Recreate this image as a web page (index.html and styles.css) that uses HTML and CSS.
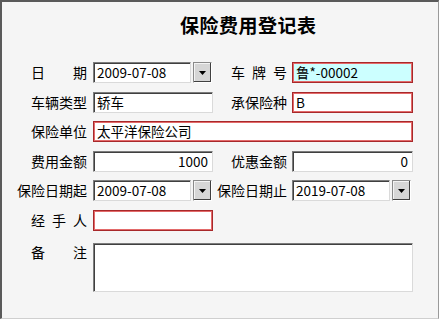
FILE: index.html
```html
<!DOCTYPE html>
<html lang="zh">
<head>
<meta charset="utf-8">
<link rel="stylesheet" href="styles.css">
</head>
<body>
<div class="frame">
  <h1 class="title">保险费用登记表</h1>
  <div class="form">
    <div class="label"><span class="sp"><span>日</span><span>期</span></span></div>
    <div class="datefield">
      <div class="box sunken date">2009-07-08</div>
      <div class="drop"><svg width="9" height="5" viewBox="0 0 9 5"><path d="M1 0h7L4.5 4z" fill="#000"/></svg></div>
    </div>
    <div class="label label2"><span class="sp w3"><span>车</span><span>牌</span><span>号</span></span></div>
    <div class="box red cyan">鲁*-00002</div>

    <div class="label">车辆类型</div>
    <div class="box sunken">轿车</div>
    <div class="label label2">承保险种</div>
    <div class="box red">B</div>

    <div class="label">保险单位</div>
    <div class="box red span3">太平洋保险公司</div>

    <div class="label">费用金额</div>
    <div class="box sunken num">1000</div>
    <div class="label label2">优惠金额</div>
    <div class="box sunken num">0</div>

    <div class="label">保险日期起</div>
    <div class="datefield">
      <div class="box sunken date">2009-07-08</div>
      <div class="drop"><svg width="9" height="5" viewBox="0 0 9 5"><path d="M1 0h7L4.5 4z" fill="#000"/></svg></div>
    </div>
    <div class="label label2">保险日期止</div>
    <div class="datefield">
      <div class="box sunken date">2019-07-08</div>
      <div class="drop"><svg width="9" height="5" viewBox="0 0 9 5"><path d="M1 0h7L4.5 4z" fill="#000"/></svg></div>
    </div>

    <div class="label"><span class="sp"><span>经</span><span>手</span><span>人</span></span></div>
    <div class="box red"></div>
    <div></div>
    <div></div>

    <div class="label top"><span class="sp"><span>备</span><span>注</span></span></div>
    <div class="box sunken memo span3"></div>
  </div>
</div>
</body>
</html>
```
FILE: styles.css
```css
* { box-sizing: border-box; }
html, body { margin: 0; padding: 0; background: #ffffff; }
body {
  font-family: "Noto Sans CJK SC", "Noto Sans", sans-serif;
  font-size: 14px;
  color: #000;
}
.frame {
  width: 439px;
  height: 319px;
  background: #f5f5f5;
  border-top: 2px solid #5a5a5a;
  border-left: 2px solid #5a5a5a;
  border-right: 1px solid #9a9a9a;
  border-bottom: 1px solid #cfcfcf;
  overflow: hidden;
}
.title {
  margin: 0;
  padding: 10px 0 0 178px;
  height: 60px;
  font-size: 19px;
  font-weight: bold;
  line-height: 26px;
  letter-spacing: 0.5px;
}
.form {
  display: grid;
  grid-template-columns: 75px 120px 79px 121px;
  grid-auto-rows: 21px;
  row-gap: 8.6px;
  padding-left: 16px;
}
.label {
  display: flex;
  align-items: center;
  justify-content: flex-end;
  padding-right: 6px;
  line-height: 21px;
  white-space: nowrap;
}
.label2 { padding-right: 5px; }
.label.top { align-items: flex-start; margin-top: 2px; }
.sp {
  display: flex;
  justify-content: space-between;
  width: 56px;
}
.box {
  height: 21px;
  line-height: 19px;
  padding: 0 3px;
  background: #ffffff;
  white-space: nowrap;
  overflow: hidden;
  font-size: 13.5px;
}
.sunken {
  border-top: 1px solid #7c7c7c;
  border-left: 1px solid #7c7c7c;
  border-right: 1px solid #dadada;
  border-bottom: 1px solid #dadada;
  box-shadow: inset 1px 1px 0 #404040;
  padding-left: 3px;
}
.red {
  border: 1px solid #a8282a;
  box-shadow: inset 0 0 0 1px #e36a6a;
}
.cyan { background: #ccffff; }
.num { text-align: right; padding-right: 4px; }
.span3 { grid-column: 2 / span 3; }
.memo {
  height: 49px;
  margin-top: 3px;
}
.datefield {
  display: flex;
  gap: 2px;
}
.datefield .date { width: 98px; }
.drop {
  width: 19px;
  height: 21px;
  background: #d6d6d6;
  border-top: 1px solid #8a8a8a;
  border-left: 1px solid #8a8a8a;
  border-right: 1px solid #ffffff;
  border-bottom: 1px solid #ffffff;
  box-shadow: inset -1px -1px 0 #404040, inset 1px 1px 0 #f4f4f4;
  display: flex;
  align-items: center;
  justify-content: center;
}
.drop svg { display: block; margin-top: 1px; }
```
